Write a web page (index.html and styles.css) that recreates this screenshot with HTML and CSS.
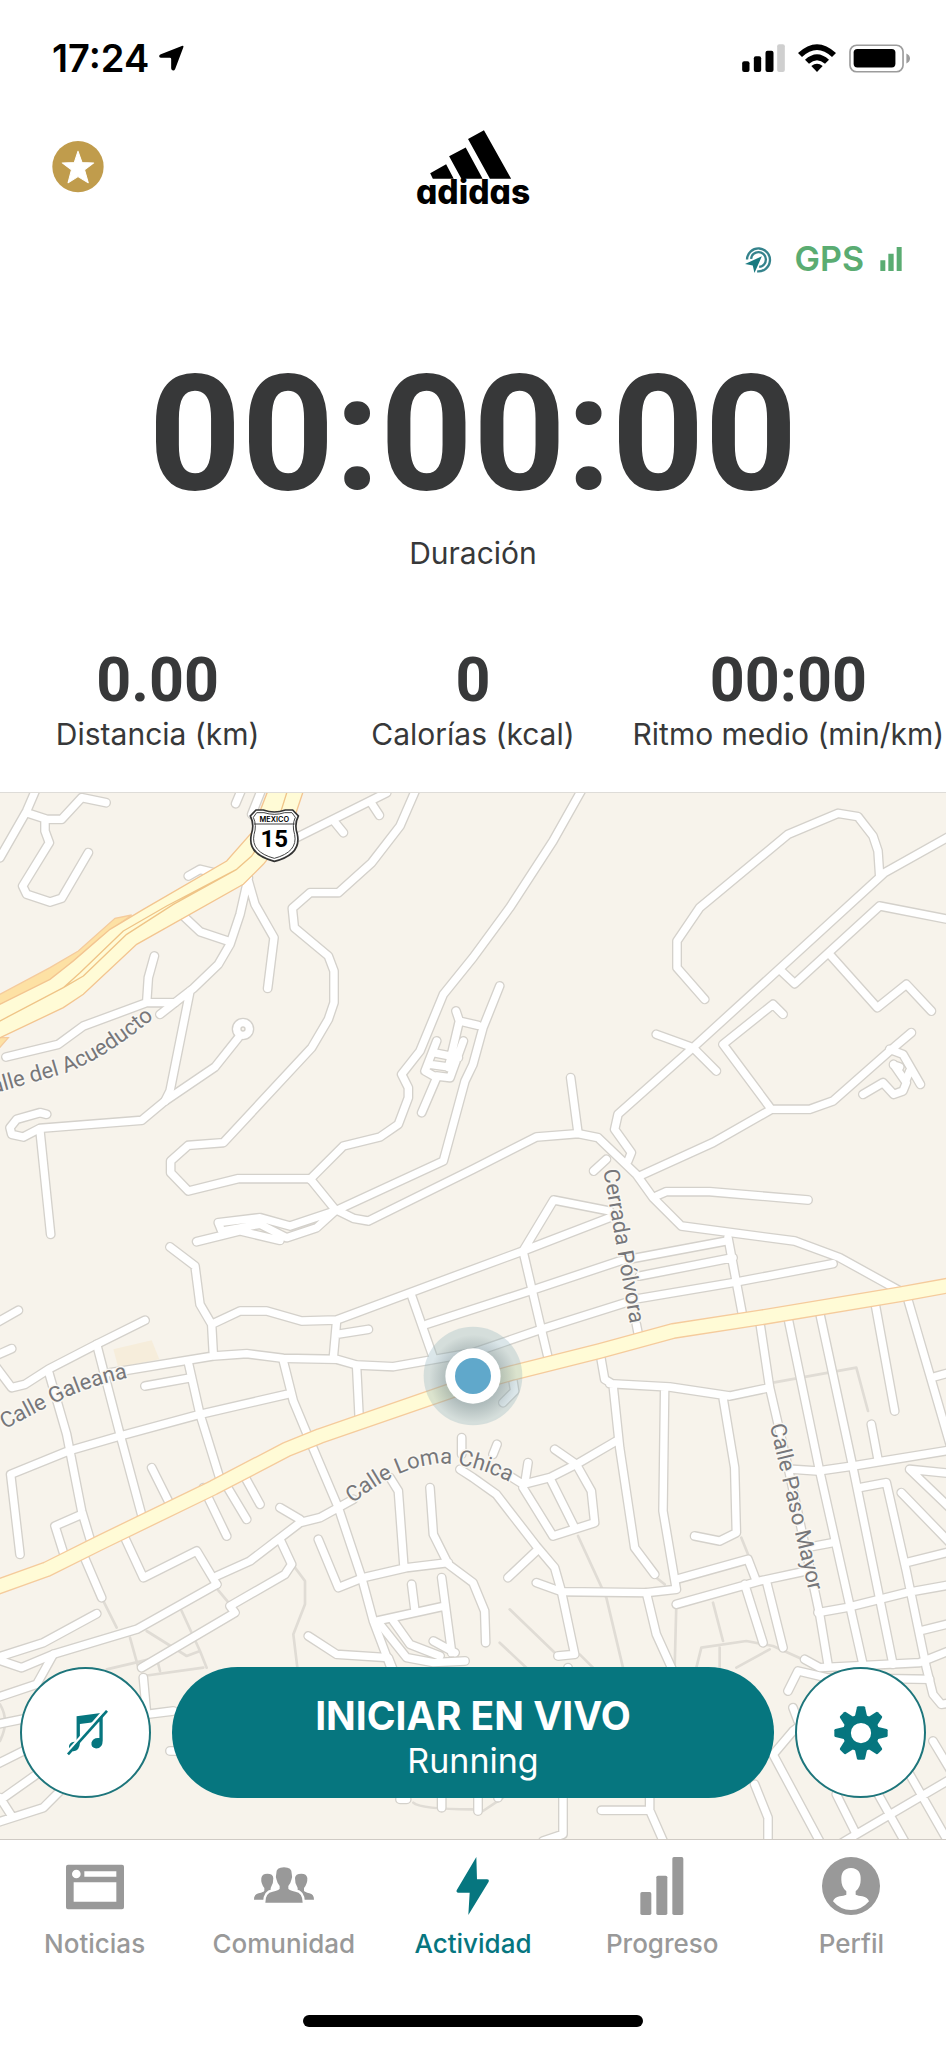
FILE: index.html
```html
<!DOCTYPE html>
<html lang="es">
<head>
<meta charset="utf-8">
<meta name="viewport" content="width=device-width, initial-scale=1">
<title>Actividad</title>
<link rel="stylesheet" href="styles.css">
</head>
<body>
<div class="app">
  <div class="status">
    <div class="status-left">
      <span class="clock">17:24</span>
      <svg class="arrow" viewBox="0 0 74 78" aria-hidden="true"><path d="M68 3Q75 0 72 8L48 72Q45 78 40 76Q36 75 36 70V42Q36 38 32 38H5Q0 38 0 34Q0 30 5 28Z"/></svg>
    </div>
    <div class="status-right">
      <svg class="signal" viewBox="0 0 128 84" aria-hidden="true"><rect y="52" width="22" height="32" rx="6"/><rect x="35" y="37" width="22" height="47" rx="6"/><rect x="70" y="20" width="24" height="64" rx="6"/><rect class="dim" x="105" y="1" width="23" height="83" rx="6"/></svg>
      <svg class="wifi" viewBox="0 0 114 84" aria-hidden="true"><path d="M0 27Q57 -26 114 27L102 39Q57 -3 12 39Z"/><path d="M21 47Q57 14 93 47L81 59Q57 38 33 59Z"/><path d="M40 66Q57 52 74 66L57 84Z"/></svg>
      <svg class="battery" viewBox="0 0 184 86" aria-hidden="true"><rect class="shell" x="3" y="3" width="160" height="80" rx="20"/><rect x="14" y="14" width="126" height="56" rx="11"/><path class="tip" d="M173 28Q184 33 184 43T173 58Z"/></svg>
    </div>
  </div>

  <header class="header">
    <button class="premium" aria-label="Premium">
      <svg viewBox="0 0 152 150" aria-hidden="true"><circle class="coin" cx="76" cy="75" r="75"/><path class="star" d="M76 30L88 63L122 64L95 84L106 122L76 104L47 122L57 84L30 64L65 63Z"/></svg>
    </button>
    <svg class="brand" viewBox="0 0 336 232" role="img" aria-label="adidas">
      <path d="M39 133L87 106L110 150H47ZM96 82L146 56L197 150H133ZM153 30L201 4L283 150H219Z"/>
      <text class="wordmark" x="168" y="226" text-anchor="middle">adidas</text>
    </svg>
  </header>

  <div class="gps">
    <svg class="live" viewBox="0 0 80 80" aria-hidden="true"><path class="ring" d="M6 40A34 34 0 1 1 36 75M18 38A22 22 0 1 1 42 62"/><path class="needle" d="M50 30L28 80L23 58L0 53Z"/></svg>
    <span class="gps-text">GPS</span>
    <svg class="gps-bars" viewBox="0 0 64 72" aria-hidden="true"><path d="M0 40H15V72H0ZM24 20H40V72H24ZM49 0H64V72H49Z"/></svg>
  </div>

  <main class="stats">
    <div class="duration">
      <div class="timer">00:00:00</div>
      <div class="label">Duración</div>
    </div>
    <div class="metrics">
      <div class="metric"><div class="value">0.00</div><div class="label">Distancia (km)</div></div>
      <div class="metric"><div class="value">0</div><div class="label">Calorías (kcal)</div></div>
      <div class="metric"><div class="value">00:00</div><div class="label">Ritmo medio (min/km)</div></div>
    </div>
  </main>

  <section class="map" aria-label="Mapa">
    <svg class="map-art" viewBox="0 0 2838 3144" preserveAspectRatio="xMidYMid slice">
      <defs>
        <radialGradient id="pin-shadow"><stop offset="60%" stop-color="#5f7379" stop-opacity="0.32"/><stop offset="100%" stop-color="#5f7379" stop-opacity="0"/></radialGradient>
        <g id="streets">
          <g transform="translate(0 -33)">
            <path d="M110 20L80 90L0 230M80 95L140 115H185L245 50L318 65M135 115V150L148 185L68 315L80 340L150 363L185 352L265 215M565 285L600 265L640 275M727 20L707 68M787 20L755 100M880 175L1110 60L1160 35M1110 60L1138 103M1000 118L1030 155"/>
            <path d="M1250 20L1200 135L1115 245L1015 335H930L877 382L883 440L985 525L1002 570V665L985 715L935 800L670 1085L565 1093L512 1140V1175L565 1230L715 1193H930L1005 1285L1060 1312L1105 1320L1419 1165L1609 1068L1734 1058L1794 1070L1909 1180L1959 1250L2044 1335L2384 1380L2519 1430L2709 1535"/>
            <path d="M745 290L720 400L690 490L655 550L580 622L525 665H440L250 735L175 790L18 828M745 300L765 370L822 470L803 622M545 400L600 452L690 482M440 665L445 590L463 525M570 630L510 930L495 960"/>
            <circle cx="729" cy="744" r="19"/>
            <path d="M715 770L645 858L495 960L425 1018L120 1042L70 1068L35 1060L30 1040L50 1015L120 995L140 1000M120 1050L152 1360M525 665L480 700"/>
            <path d="M1749 20L1659 180L1529 380L1419 530L1330 640L1260 810L1205 880L1225 920V950L1195 1030L1140 1068L1030 1095L930 1195M1005 1290L1330 1140L1395 900L1419 850L1449 740L1499 615M1368 690L1378 720L1345 860M1378 720L1434 733M1310 780L1275 870L1310 890L1265 995M1390 780L1350 890L1310 885M1300 815L1375 830M1290 850L1360 860"/>
            <path d="M1005 1290L870 1335L780 1310L655 1325L665 1350L780 1330L860 1370L950 1340L1005 1290M590 1382L720 1350L840 1378"/>
          </g>
          <g transform="translate(1419 -33)">
            <path d="M695 655L612 560V480L680 380L945 160L1095 97L1155 107L1200 165L1215 210L1220 285M1440 160L1235 275L660 800L435 1000L425 1045L475 1115L465 1140M550 760L660 800L730 870M925 570L965 608L1220 375L1440 418M1070 520L1213 680L1300 610L1375 690"/>
            <path d="M930 700L900 670L750 790L895 985H1010L1080 960L1250 810L1315 755M895 985L720 1085L500 1185M1250 805L1290 820L1342 910M1262 850L1300 905L1290 930L1262 940L1230 905L1170 940M1262 852L1280 858M1300 895L1310 870M293 890L315 1055M550 1245L580 1232H710L1005 1257M362 1170L400 1135M410 1290L242 1257L150 1410L410 1310"/>
          </g>
          <g transform="translate(0 1287)">
            <path d="M510 78L585 135L600 250L635 310L640 400M635 310L720 270H800L905 300L1010 297L1419 145L1569 90M1010 297L1000 410M1010 340L1105 325M-10 305L55 268M-10 403L35 383M-10 440L35 500L75 490L145 445L290 370L435 298M330 455L385 447L640 405L740 398L850 412L1010 415L1070 432L1180 437L1419 395L1624 325L1919 232L2199 185L2499 128"/>
            <path d="M145 450L200 640L245 870L275 970M290 370L360 640L430 900M60 1000L32 760L205 690L360 645L600 580L860 520M245 880L165 915L195 1010M245 990L305 1130M435 495L575 470M565 425L600 580L665 790M850 420L880 540L930 660L1015 860L1085 1070L1120 1200L1180 1360M1070 440L1078 600M455 740L510 850M365 930L430 1070L590 990L650 1090M650 1065L750 1020L900 905L960 890L1060 835M840 860L900 895M610 800L680 945M665 770L740 895M725 750L780 850"/>
            <path d="M1170 770L1195 810L1212 1040M1290 800L1300 940L1345 1030L1419 1085L1454 1170L1457 1265M840 955L875 1030L855 1060L690 1155L705 1175L425 1340M650 1090L410 1225L160 1300L65 1340L-10 1315M290 1178L130 1265L-10 1310M955 955L1015 1100L1090 1070L1220 1040L1345 1025M1235 225L1300 410M1280 310L1419 265L1589 210L1859 120L2179 60M1385 650V700M1380 745L1419 770L1489 820L1609 975L1664 1040L1684 1110L1724 1300L1674 1305"/>
            <path d="M925 1245L1010 1300L1165 1310L1185 1360M1130 1200L1335 1155M1235 1090L1245 1170M1325 1070L1355 1295M1180 1200L1230 1270L1320 1305M1140 1210L1220 1310L1300 1325L1395 1320M1300 1260L1365 1295M160 1300L110 1390L-10 1430M-10 1510L90 1490M-10 1630L130 1560M-10 1745L110 1660M-10 1805L130 1760L180 1710M0 1730L35 1785M430 1370L440 1480L520 1470M510 1590H560M1220 1735H1200M1325 1700V1760"/>
          </g>
          <g transform="translate(1419 1287)">
            <path d="M150 90L205 325L230 430M765 50L810 290M500 165L780 110M380 390L395 475L420 490L440 680L485 980L545 1060M410 488L590 498L770 525L890 500M575 500L570 870L610 1105L520 1115L265 1112L190 1085M750 530L785 740L790 935L740 960L665 945M860 300L890 500L950 760L1040 1180L1065 1330M945 290L1040 750L1170 1330M1040 275L1140 740L1260 1330M1205 240L1265 570M1300 220L1440 700"/>
            <path d="M1375 470L1440 452M960 745L1035 750L1140 735L1440 686M1195 610L1215 715M1160 800L1240 785L1300 1050L1360 1340L1380 1420L1405 1450L1440 1445M1440 758L1310 745L1440 870M1285 815L1440 975M1000 980L1080 965M1035 1175L1120 1160L1300 1115L1440 1090M1300 1025L1440 990M1340 1230L1440 1205M995 1315L1040 1340L1340 1325L1440 1285M610 1150L860 1080L1000 1050M610 1075L825 1015L850 1080M815 1090L870 1265M880 1080L930 1280M520 1115L550 1240L600 1350"/>
            <path d="M245 685L310 730L430 660M110 765L150 790L230 770L310 730L355 810L365 905L240 945L150 800M230 770L305 920M165 725L155 790M72 670L60 700M105 1070L190 990M285 1340V1360M490 310L498 350M120 480L125 510L90 545M15 1720V1770M75 1720V1730M270 1720V1840L210 1860M385 1768H530L575 1870M530 1720V1768M845 1690L885 1790V1870M900 1600L1045 1870M945 1410L975 1350L1060 1370L1370 1375M905 1595L960 1530L1000 1500M960 1460L975 1500M1090 1720L1150 1840L1440 1670M1150 1840L1100 1870M1210 1710L1300 1870M1310 1660L1430 1870M1380 1560L1440 1660"/>
          </g>
        </g>
        <path id="avenue" d="M-20 2389L140 2332L300 2252L640 2087L860 1972L960 1932L1380 1787L1539 1742L1799 1677L2019 1617L2279 1577L2699 1507L2860 1478"/>
        <path id="lbl-acueducto" d="M-20 905Q70 880 190 845Q330 800 540 610"/>
        <path id="lbl-galeana" d="M14 1912Q120 1856 200 1816Q300 1771 440 1746"/>
        <path id="lbl-loma" d="M1058 2135Q1180 2034 1290 2018Q1400 1998 1580 2096"/>
        <path id="lbl-cerrada" d="M1810 1135L1905 1682"/>
        <path id="lbl-paso" d="M2309 1900L2443 2468"/>
      </defs>
      <g class="paths">
        <path transform="translate(0 1287)" d="M305 1130L350 1220M390 1250L415 1340M640 1090L690 1150M545 1170L600 1290L620 1340M440 1230L560 1305L600 1290M885 1040L915 1080V1150L880 1240L892 1340M320 1345L470 1310L480 1350M430 1365L610 1340M0 1450Q30 1500 0 1560M1240 1745Q1260 1765 1419 1765"/>
        <path transform="translate(1419 1287)" d="M900 485L1150 440L1185 570M315 945L400 1130L450 1340M110 1165L250 1300M80 1265L160 1340M320 1300L360 1340M610 1150L605 1340M720 1145L750 1260M670 1340L685 1280L820 1260L900 1275L1000 1320M790 1340L890 1285M740 1280V1340M550 1070L575 1090M805 950L825 1000M30 1770L90 1730"/>
      </g>
      <path class="plot" d="M340 1672L455 1645L478 1702L355 1727Z"/>
      <use href="#streets" class="street-edge"/>
      <use href="#streets" class="street"/>
      <use href="#avenue" class="avenue-edge"/>
      <use href="#avenue" class="avenue"/>
      <g transform="translate(0 -33)">
        <path class="ramp" d="M-10 645L150 560L235 510L345 412L395 402L300 470L150 600L-10 675ZM-10 770L25 770L-10 810Z"/>
        <path class="highway" d="M-10 675L150 595L220 540L330 445L430 385L680 240L755 155L815 0H920L870 150L790 250L730 310L410 490L250 640L190 680L-10 775Z"/>
        <path class="median" d="M865 20L840 100L755 225L710 265L500 375L370 450L240 575L190 620L-10 725M710 265L520 370L380 460L250 585L190 620"/>
      </g>
      <g transform="translate(750 52)">
        <path class="shield" d="M18 2H40Q73 14 106 2H128L145 20Q132 45 142 75Q155 135 73 156Q-9 135 4 75Q14 45 1 20Z"/>
        <path class="shield-line" d="M20 10H42Q73 20 104 10H126L136 24Q125 48 134 76Q144 128 73 147Q2 128 12 76Q21 48 10 24ZM12 44H134"/>
        <text class="shield-name" x="73" y="37" text-anchor="middle">MEXICO</text>
        <text class="shield-num" x="73" y="112" text-anchor="middle">15</text>
      </g>
      <g class="street-name">
        <text><textPath href="#lbl-acueducto">alle del Acueducto</textPath></text>
        <text><textPath href="#lbl-galeana">Calle Galeana</textPath></text>
        <text><textPath href="#lbl-loma">Calle Loma Chica</textPath></text>
        <text><textPath href="#lbl-cerrada">Cerrada Pólvora</textPath></text>
        <text><textPath href="#lbl-paso">Calle Paso Mayor</textPath></text>
      </g>
      <circle class="halo" cx="1419" cy="1752" r="148"/>
      <circle cx="1419" cy="1760" r="132" fill="url(#pin-shadow)"/>
      <circle class="pin" cx="1419" cy="1752" r="83"/>
      <circle class="dot" cx="1419" cy="1752" r="54"/>
    </svg>
    <div class="controls">
      <button class="round" aria-label="Música">
        <svg class="music" viewBox="0 0 124 138" aria-hidden="true"><path d="M29 18L108 8V92Q108 116 88 116Q72 114 74 98Q78 82 98 84V34L39 42V100Q38 122 20 124Q4 124 6 108Q10 94 29 96Z"/><path class="gap" d="M0 128L118 -6"/><path class="slash" d="M3 134L121 2"/></svg>
      </button>
      <button class="start"><span class="start-title">INICIAR EN VIVO</span><span class="start-type">Running</span></button>
      <button class="round" aria-label="Ajustes">
        <svg class="gear" viewBox="-80 -80 160 160" aria-hidden="true">
          <defs><path id="tooth" d="M-19 -45L-12 -76Q-11 -79 -8 -79H8Q11 -79 12 -76L19 -45Z"/></defs>
          <circle class="wheel" r="42"/>
          <use href="#tooth"/><use href="#tooth" transform="rotate(45)"/><use href="#tooth" transform="rotate(90)"/><use href="#tooth" transform="rotate(135)"/><use href="#tooth" transform="rotate(180)"/><use href="#tooth" transform="rotate(225)"/><use href="#tooth" transform="rotate(270)"/><use href="#tooth" transform="rotate(315)"/>
        </svg>
      </button>
    </div>
  </section>

  <nav class="tabs">
    <a class="tab" href="#noticias">
      <svg viewBox="0 0 180 180" aria-hidden="true"><path fill-rule="evenodd" d="M9 26H171Q177 26 177 32V154Q177 160 171 160H9Q3 160 3 154V32Q3 26 9 26ZM58 46V62H154V46ZM26 79V137H154V79ZM34 41A13 13 0 1 0 34 67A13 13 0 1 0 34 41Z"/></svg>
      <span>Noticias</span>
    </a>
    <a class="tab" href="#comunidad">
      <svg viewBox="0 0 180 180" aria-hidden="true"><path d="M40 53Q57 53 58 66Q59 82 50 96V104Q53 110 66 113Q74 118 75 131H0Q0 115 14 112Q30 108 31 104V96Q20 82 22 66Q24 53 40 53ZM142 53Q124 53 123 66Q122 82 131 96V104Q128 110 116 113Q106 118 105 131H180Q180 115 166 112Q152 108 150 104V96Q161 82 160 66Q158 53 142 53Z"/><path class="front" d="M67 52Q66 34 90 34Q114 34 113 52Q116 62 112 72Q110 82 103 90V98Q105 103 124 107Q146 110 146 140H34Q34 110 56 107Q75 103 77 98V90Q70 82 68 72Q64 62 67 52Z"/></svg>
      <span>Comunidad</span>
    </a>
    <a class="tab active" href="#actividad" aria-current="page">
      <svg viewBox="0 0 180 180" aria-hidden="true"><path d="M100 3L41 103Q39 110 46 110H80L76 177L137 77Q139 70 132 70H102Z"/></svg>
      <span>Actividad</span>
    </a>
    <a class="tab" href="#progreso">
      <svg viewBox="0 0 180 180" aria-hidden="true"><rect x="25" y="108" width="33" height="69" rx="5"/><rect x="73" y="59" width="33" height="118" rx="5"/><rect x="121" y="3" width="33" height="174" rx="5"/></svg>
      <span>Progreso</span>
    </a>
    <a class="tab" href="#perfil">
      <svg viewBox="0 0 180 180" aria-hidden="true"><path fill-rule="evenodd" d="M90 3A87 87 0 1 1 90 177A87 87 0 1 1 90 3ZM90 36Q59 38 61 72Q61 94 76 106V116Q68 120 56 121Q40 124 36 136Q58 162 90 162Q122 162 144 136Q140 124 124 121Q112 120 104 116V106Q119 94 119 72Q121 38 90 36Z"/></svg>
      <span>Perfil</span>
    </a>
  </nav>
  <div class="home"><span class="home-bar"></span></div>
</div>
</body>
</html>
```
FILE: styles.css
```css
* {
  box-sizing: border-box;
}

body {
  margin: 0;
  background: #fff;
  color: #373839;
  font-family: Inter, "Noto Sans", sans-serif;
}

button {
  padding: 0;
  border: 0;
  background: none;
  font: inherit;
  cursor: pointer;
}

svg {
  display: block;
}

.app {
  display: flex;
  flex-direction: column;
  min-height: 100vh;
}

.status {
  display: flex;
  justify-content: space-between;
  align-items: center;
  height: 116px;
  padding: 0 36px 0 52px;
  color: #000;
}

.status-left {
  display: flex;
  align-items: center;
  gap: 10px;
}

.clock {
  font-size: 38px;
  font-weight: 600;
  line-height: 44px;
}

.arrow {
  width: 25px;
  height: 26px;
}

.status-right {
  display: flex;
  align-items: center;
  gap: 13px;
}

.signal {
  width: 43px;
  height: 28px;
}

.dim {
  fill: #cfcfcf;
}

.wifi {
  width: 38px;
  height: 28px;
}

.battery {
  width: 61px;
  height: 29px;
}

.shell {
  fill: none;
  stroke: #9c9c9c;
  stroke-width: 5;
}

.tip {
  fill: #9c9c9c;
}

.header {
  display: grid;
  grid-template-columns: 1fr auto 1fr;
  align-items: center;
  height: 102px;
  padding: 0 52px;
}

.premium {
  width: 52px;
  height: 52px;
}

.coin {
  fill: #c09c4c;
}

.star {
  fill: #fff;
  stroke: #fff;
  stroke-width: 3;
  stroke-linejoin: round;
}

.brand {
  width: 112px;
  height: 77px;
  overflow: visible;
}

.wordmark {
  font-size: 101px;
  font-weight: 800;
  font-feature-settings: "cv11";
}

.gps {
  display: flex;
  justify-content: flex-end;
  align-items: center;
  height: 82px;
  padding-right: 44px;
  color: #5aac72;
}

.live {
  width: 27px;
  height: 27px;
}

.ring {
  fill: none;
  stroke: #35838c;
  stroke-width: 7;
}

.needle {
  fill: #197a80;
}

.gps-text {
  margin: 0 16px 0 22px;
  font-size: 34px;
  font-weight: 600;
  line-height: 40px;
}

.gps-bars {
  width: 22px;
  height: 24px;
  fill: #5aac72;
}

.stats {
  text-align: center;
}

.timer,
.value,
.shield-num {
  font-family: Roboto, sans-serif;
  font-weight: 700;
}

.timer {
  padding-top: 50px;
  font-size: 162px;
  line-height: 168px;
}

.label {
  font-size: 30px;
  line-height: 36px;
  white-space: nowrap;
}

.duration .label {
  margin-top: 17px;
}

.metrics {
  display: grid;
  grid-template-columns: repeat(3, minmax(0, 1fr));
  padding: 74px 0 40px;
}

.value {
  font-size: 61px;
  line-height: 71px;
}

.map {
  position: relative;
  display: flex;
  flex: 1;
  flex-direction: column;
  justify-content: flex-end;
  min-height: 400px;
  overflow: hidden;
  border-top: 1px solid #dedcd8;
  background: #f7f3eb;
}

.map-art {
  position: absolute;
  inset: 0;
  width: 100%;
  height: 100%;
}

.street-edge,
.street,
.avenue-edge,
.avenue,
.paths,
.median {
  fill: none;
  stroke-linecap: round;
  stroke-linejoin: round;
}

.street-edge {
  stroke: #d4d1cb;
  stroke-width: 30;
}

.street {
  stroke: #fff;
  stroke-width: 22;
}

.avenue-edge {
  stroke: #f5cb9c;
  stroke-width: 48;
}

.avenue {
  stroke: #fffbd6;
  stroke-width: 40;
}

.paths {
  stroke: #e0dcd5;
  stroke-width: 8;
}

.plot {
  fill: #f6eddb;
}

.ramp {
  fill: #fde1a4;
  stroke: #f5cb9c;
  stroke-width: 4;
}

.highway {
  fill: #fffbd6;
  stroke: #f3c590;
  stroke-width: 4;
}

.median {
  stroke: #efc487;
  stroke-width: 4;
}

.shield {
  fill: #fff;
  stroke: #333;
  stroke-width: 5;
}

.shield-line {
  fill: none;
  stroke: #444;
  stroke-width: 3;
}

.shield-name {
  font-size: 22px;
  font-weight: 600;
}

.shield-num {
  font-size: 72px;
}

.street-name {
  fill: #77777a;
  stroke: #faf8f3;
  stroke-width: 9;
  stroke-linejoin: round;
  paint-order: stroke;
  font-family: Roboto, sans-serif;
  font-size: 66px;
}

.halo {
  fill: #8fb0ba;
  opacity: 0.32;
}

.pin {
  fill: #fff;
}

.dot {
  fill: #60a8cb;
}

.controls {
  position: relative;
  display: grid;
  grid-template-columns: 131px 1fr 131px;
  gap: 21px;
  padding: 0 20px 41px;
}

.round {
  display: flex;
  justify-content: center;
  align-items: center;
  height: 131px;
  border: 2px solid #1d757b;
  border-radius: 50%;
  background: #fff;
}

.music {
  width: 41px;
  height: 46px;
  margin-left: 4px;
  fill: #06767f;
}

.gap,
.slash {
  fill: none;
  stroke: #fff;
  stroke-width: 8;
}

.slash {
  stroke: #06767f;
}

.gear {
  width: 54px;
  height: 54px;
  fill: #06767f;
}

.wheel {
  fill: none;
  stroke: #06767f;
  stroke-width: 24;
}

.start {
  display: flex;
  flex-direction: column;
  justify-content: center;
  align-items: center;
  height: 131px;
  padding-top: 9px;
  border-radius: 66px;
  background: #06767f;
  color: #fff;
}

.start-title {
  font-size: 39px;
  font-weight: 700;
  line-height: 48px;
}

.start-type {
  font-size: 34px;
  line-height: 42px;
}

.tabs {
  display: grid;
  grid-template-columns: repeat(5, 1fr);
  height: 132px;
  padding-top: 16px;
  border-top: 1px solid #cfcac4;
}

.tab {
  display: flex;
  flex-direction: column;
  align-items: center;
  gap: 12px;
  color: #999;
  font-size: 26px;
  font-weight: 500;
  line-height: 32px;
  text-decoration: none;
}

.tab svg {
  width: 60px;
  height: 60px;
  fill: currentColor;
}

.front {
  stroke: #fff;
  stroke-width: 14;
  paint-order: stroke;
}

.tab.active {
  color: #06767f;
}

.home {
  display: flex;
  justify-content: center;
  height: 77px;
  padding-top: 44px;
}

.home-bar {
  width: 36%;
  height: 12px;
  border-radius: 6px;
  background: #000;
}
```
